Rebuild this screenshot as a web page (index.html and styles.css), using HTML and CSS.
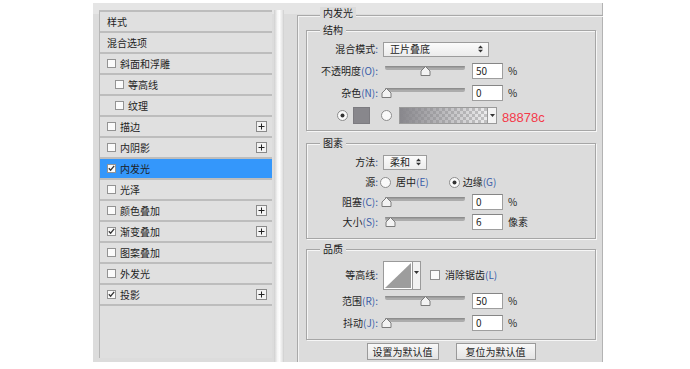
FILE: index.html
```html
<!DOCTYPE html>
<html lang="zh-CN">
<head>
<meta charset="utf-8">
<title>图层样式 - 内发光</title>
<link rel="stylesheet" href="styles.css">
</head>
<body>
<div class="panel">
  <div class="side">
    <ul class="list">
      <li class="row">样式</li>
      <li class="row">混合选项</li>
      <li class="row"><span class="cb"></span>斜面和浮雕</li>
      <li class="row sub"><span class="cb"></span>等高线</li>
      <li class="row sub"><span class="cb"></span>纹理</li>
      <li class="row"><span class="cb"></span>描边<span class="plus"><svg width="9" height="9" viewBox="0 0 9 9"><path d="M4.5 1.5V7.5M1.5 4.5H7.5" stroke="#222" stroke-width="1"/></svg></span></li>
      <li class="row"><span class="cb"></span>内阴影<span class="plus"><svg width="9" height="9" viewBox="0 0 9 9"><path d="M4.5 1.5V7.5M1.5 4.5H7.5" stroke="#222" stroke-width="1"/></svg></span></li>
      <li class="row active"><span class="cb"><svg width="7" height="7" viewBox="0 0 7 7"><path d="M0.8 3.3L2.6 5.2L6.2 0.8" fill="none" stroke="#333" stroke-width="1.3"/></svg></span>内发光</li>
      <li class="row"><span class="cb"></span>光泽</li>
      <li class="row"><span class="cb"></span>颜色叠加<span class="plus"><svg width="9" height="9" viewBox="0 0 9 9"><path d="M4.5 1.5V7.5M1.5 4.5H7.5" stroke="#222" stroke-width="1"/></svg></span></li>
      <li class="row"><span class="cb"><svg width="7" height="7" viewBox="0 0 7 7"><path d="M0.8 3.3L2.6 5.2L6.2 0.8" fill="none" stroke="#333" stroke-width="1.3"/></svg></span>渐变叠加<span class="plus"><svg width="9" height="9" viewBox="0 0 9 9"><path d="M4.5 1.5V7.5M1.5 4.5H7.5" stroke="#222" stroke-width="1"/></svg></span></li>
      <li class="row"><span class="cb"></span>图案叠加</li>
      <li class="row"><span class="cb"></span>外发光</li>
      <li class="row"><span class="cb"><svg width="7" height="7" viewBox="0 0 7 7"><path d="M0.8 3.3L2.6 5.2L6.2 0.8" fill="none" stroke="#333" stroke-width="1.3"/></svg></span>投影<span class="plus"><svg width="9" height="9" viewBox="0 0 9 9"><path d="M4.5 1.5V7.5M1.5 4.5H7.5" stroke="#222" stroke-width="1"/></svg></span></li>
    </ul>
  </div>
  <div class="scroll"></div>
  <div class="main">
    <div class="outer">
      <div class="legend">内发光</div>

      <div class="group g1">
        <div class="legend">结构</div>
        <div class="rows">
          <div class="frow">
            <span class="lab">混合模式<span class="k">:</span></span>
            <div class="select wide">正片叠底<svg class="arr" width="5" height="8" viewBox="0 0 5 8"><path d="M0 3.2L2.5 0.4L5 3.2ZM0 4.8L2.5 7.6L5 4.8Z" fill="#333"/></svg></div>
          </div>
          <div class="frow">
            <span class="lab">不透明度<span class="k">(O):</span></span>
            <svg class="slider" width="90" height="12" viewBox="0 0 90 12"><rect x="5" y="1" width="80" height="4" rx="2" fill="#acacac"/><rect x="5" y="1" width="80" height="1.5" rx="0.75" fill="#8d8d8d"/><path d="M45.5 1.5L50 6V10.5H41V6Z" fill="#f3f3f3" stroke="#7b7b7b"/></svg>
            <span class="input">50</span><span class="unit">%</span>
          </div>
          <div class="frow">
            <span class="lab">杂色<span class="k">(N):</span></span>
            <svg class="slider" width="90" height="12" viewBox="0 0 90 12"><rect x="5" y="1" width="80" height="4" rx="2" fill="#acacac"/><rect x="5" y="1" width="80" height="1.5" rx="0.75" fill="#8d8d8d"/><path d="M6.5 1.5L11 6V10.5H2V6Z" fill="#f3f3f3" stroke="#7b7b7b"/></svg>
            <span class="input">0</span><span class="unit">%</span>
          </div>
          <div class="frow colors">
            <svg class="radio" width="11" height="11" viewBox="0 0 11 11"><circle cx="5.5" cy="5.5" r="5" fill="#fafafa" stroke="#8c8c8c"/><circle cx="5.5" cy="5.5" r="2" fill="#333"/></svg>
            <span class="swatch"></span>
            <svg class="radio r2" width="11" height="11" viewBox="0 0 11 11"><circle cx="5.5" cy="5.5" r="5" fill="#fafafa" stroke="#8c8c8c"/></svg>
            <span class="gradient"><span class="gbar"></span><span class="gdrop"><svg width="5" height="3" viewBox="0 0 5 3"><path d="M0 0H5L2.5 3Z" fill="#333"/></svg></span></span>
            <span class="hex">88878c</span>
          </div>
        </div>
      </div>

      <div class="group g2">
        <div class="legend">图素</div>
        <div class="rows">
          <div class="frow">
            <span class="lab">方法<span class="k">:</span></span>
            <div class="select narrow">柔和<svg class="arr" width="5" height="8" viewBox="0 0 5 8"><path d="M0 3.2L2.5 0.4L5 3.2ZM0 4.8L2.5 7.6L5 4.8Z" fill="#333"/></svg></div>
          </div>
          <div class="frow">
            <span class="lab">源<span class="k">:</span></span>
            <svg class="radio" width="11" height="11" viewBox="0 0 11 11"><circle cx="5.5" cy="5.5" r="5" fill="#fafafa" stroke="#8c8c8c"/></svg>
            <span class="rtext">居中<span class="k">(E)</span></span>
            <svg class="radio r3" width="11" height="11" viewBox="0 0 11 11"><circle cx="5.5" cy="5.5" r="5" fill="#fafafa" stroke="#8c8c8c"/><circle cx="5.5" cy="5.5" r="2" fill="#333"/></svg>
            <span class="rtext">边缘<span class="k">(G)</span></span>
          </div>
          <div class="frow">
            <span class="lab">阻塞<span class="k">(C):</span></span>
            <svg class="slider" width="90" height="12" viewBox="0 0 90 12"><rect x="5" y="1" width="80" height="4" rx="2" fill="#acacac"/><rect x="5" y="1" width="80" height="1.5" rx="0.75" fill="#8d8d8d"/><path d="M6.5 1.5L11 6V10.5H2V6Z" fill="#f3f3f3" stroke="#7b7b7b"/></svg>
            <span class="input">0</span><span class="unit">%</span>
          </div>
          <div class="frow">
            <span class="lab">大小<span class="k">(S):</span></span>
            <svg class="slider" width="90" height="12" viewBox="0 0 90 12"><rect x="5" y="1" width="80" height="4" rx="2" fill="#acacac"/><rect x="5" y="1" width="80" height="1.5" rx="0.75" fill="#8d8d8d"/><path d="M10.5 1.5L15 6V10.5H6V6Z" fill="#f3f3f3" stroke="#7b7b7b"/></svg>
            <span class="input">6</span><span class="unit">像素</span>
          </div>
        </div>
      </div>

      <div class="group g3">
        <div class="legend">品质</div>
        <div class="rows">
          <div class="frow tall">
            <span class="lab">等高线<span class="k">:</span></span>
            <span class="contour"><svg class="cthumb" width="28" height="27" viewBox="0 0 28 27"><rect width="28" height="27" fill="#fff"/><path d="M1 26L27 1V26Z" fill="#9d9d9d"/></svg><span class="cdrop"><svg width="5" height="3" viewBox="0 0 5 3"><path d="M0 0H5L2.5 3Z" fill="#333"/></svg></span></span>
            <span class="box"></span>
            <span class="rtext">消除锯齿<span class="k">(L)</span></span>
          </div>
          <div class="frow">
            <span class="lab">范围<span class="k">(R):</span></span>
            <svg class="slider" width="90" height="12" viewBox="0 0 90 12"><rect x="5" y="1" width="80" height="4" rx="2" fill="#acacac"/><rect x="5" y="1" width="80" height="1.5" rx="0.75" fill="#8d8d8d"/><path d="M45.5 1.5L50 6V10.5H41V6Z" fill="#f3f3f3" stroke="#7b7b7b"/></svg>
            <span class="input">50</span><span class="unit">%</span>
          </div>
          <div class="frow">
            <span class="lab">抖动<span class="k">(J):</span></span>
            <svg class="slider" width="90" height="12" viewBox="0 0 90 12"><rect x="5" y="1" width="80" height="4" rx="2" fill="#acacac"/><rect x="5" y="1" width="80" height="1.5" rx="0.75" fill="#8d8d8d"/><path d="M6.5 1.5L11 6V10.5H2V6Z" fill="#f3f3f3" stroke="#7b7b7b"/></svg>
            <span class="input">0</span><span class="unit">%</span>
          </div>
        </div>
      </div>

      <div class="buttons">
        <span class="btn b1">设置为默认值</span>
        <span class="btn b2">复位为默认值</span>
      </div>
    </div>
  </div>
</div>
</body>
</html>
```

FILE: styles.css
```css
* { box-sizing: border-box; }

body {
  margin: 0;
  background: #ffffff;
  font-family: "Noto Sans CJK SC", "Liberation Sans", sans-serif;
  font-size: 10px;
  color: #1e1e1e;
}

.panel {
  margin: 3px 0 0 93px;
  width: 510px;
  height: 359px;
  display: flex;
  background: linear-gradient(#e5e5e5 0, #e5e5e5 11px, #dcdcdc 11px);
  border-right: 1px solid #b3b3b3;
}

/* ---------- left style list ---------- */
.side {
  flex: none;
  width: 179px;
  padding: 7px 0 0 6px;
}

.list {
  margin: 0;
  padding: 0;
  list-style: none;
  width: 173px;
  height: 348px;
  border-left: 1px solid #b6b6b6;
  border-top: 2px solid #bdbdbd;
  background: #dfdfdf;
}

.row {
  height: 21px;
  display: flex;
  align-items: center;
  padding-left: 7px;
  padding-right: 5px;
  border-bottom: 2px solid #bdbdbd;
  background: #e0e0e0;
  line-height: 12px;
  white-space: nowrap;
}

.row.sub { padding-left: 15px; }

.row.active { background: #3497fb; }

.cb {
  flex: none;
  width: 9px;
  height: 9px;
  margin-right: 4px;
  border: 1px solid #939393;
  background: #fbfbfb;
  display: flex;
  align-items: center;
  justify-content: center;
}

.plus {
  flex: none;
  margin-left: auto;
  width: 11px;
  height: 11px;
  border: 1px solid #8a8a8a;
  background: #f3f3f3;
  display: flex;
}

.scroll {
  flex: none;
  width: 10px;
  margin: 7px 0 0 2px;
  background: linear-gradient(to right, #cfcfcf, #f6f6f6 35%, #fdfdfd 55%, #e3e3e3 85%, #cccccc);
}

/* ---------- right settings ---------- */
.main {
  flex: 1;
  margin-left: 13px;
  padding-top: 12px;
}

.outer {
  height: 347px;
  border-top: 1px solid #a9a9a9;
  border-left: 1px solid #a9a9a9;
  box-shadow: inset 1px 1px 0 #f4f4f4;
  padding: 0 7px 0 8px;
}

.legend {
  display: table;
  padding: 0 3px;
  line-height: 12px;
  background: #dcdcdc;
  color: #1a1a1a;
}

.outer > .legend { margin: -9px 0 0 14px; }

.group {
  border: 1px solid #a6a6a6;
  box-shadow: inset 1px 1px 0 #f6f6f6, 1px 1px 0 #f6f6f6;
}

.group > .legend { margin: -7px 0 0 13px; }

.g1 { margin-top: 11px; height: 101px; }
.g2 { margin-top: 12px; height: 96px; }
.g3 { margin-top: 10px; height: 91px; }

.g1 .rows { padding-top: 2px; }
.g2 .rows { padding-top: 3px; }
.g3 .rows { padding-top: 5px; }

.frow {
  display: flex;
  align-items: center;
  height: 22px;
  white-space: nowrap;
  line-height: 12px;
}

.g2 .frow { height: 20px; }
.g3 .frow { height: 22px; }
.g3 .frow.tall { height: 30px; }

.lab {
  flex: none;
  width: 71px;
  margin-right: 2px;
  text-align: right;
}

.k { color: #3a5ca8; }

.select {
  flex: none;
  margin-left: 3px;
  height: 15px;
  padding: 0 5px 0 6px;
  display: flex;
  align-items: center;
  justify-content: space-between;
  border: 1px solid #9c9c9c;
  background: linear-gradient(#fbfbfb, #ececec);
}

.select.wide { width: 106px; }
.select.narrow { width: 44px; }

.slider { flex: none; display: block; }

.input {
  flex: none;
  width: 31px;
  height: 16px;
  margin-left: 2px;
  padding-left: 3px;
  line-height: 14px;
  background: #ffffff;
  border: 1px solid #9e9e9e;
  border-top-color: #858585;
}

.unit { margin-left: 5px; }

.colors { padding-left: 30px; }
.colors .hex { margin-top: 6px; }

.radio { flex: none; display: block; }

.swatch {
  flex: none;
  width: 17px;
  height: 17px;
  margin-left: 5px;
  background: #88878c;
  border: 1px solid #7c7b80;
}

.r2 { margin-left: 11px; }

.gradient {
  flex: none;
  display: flex;
  width: 98px;
  height: 17px;
  margin-left: 7px;
  border: 1px solid #9a9a9a;
  background: #ffffff;
}

.gbar {
  flex: 1;
  background:
    linear-gradient(to right, #88878c, rgba(136, 135, 140, 0.15)),
    repeating-conic-gradient(#ffffff 0 25%, #cdcdcd 0 50%) 0 0 / 6px 6px;
}

.gdrop {
  flex: none;
  width: 9px;
  border-left: 1px solid #9a9a9a;
  background: #f4f4f4;
  display: flex;
  align-items: center;
  justify-content: center;
}

.hex {
  margin-left: 5px;
  font-family: "Liberation Sans", sans-serif;
  font-size: 13px;
  color: #f43a4a;
}

.rtext { margin-left: 5px; }
.r3 { margin-left: 20px; }
.r3 + .rtext { margin-left: 3px; }

.contour {
  flex: none;
  display: flex;
  margin-left: 3px;
  height: 29px;
  border: 1px solid #9a9a9a;
  background: #ffffff;
}

.cthumb { display: block; }

.cdrop {
  width: 8px;
  border-left: 1px solid #9a9a9a;
  background: #f2f2f2;
  display: flex;
  justify-content: center;
  padding-top: 9px;
}

.box {
  flex: none;
  width: 10px;
  height: 10px;
  margin-left: 9px;
  border: 1px solid #8f8f8f;
  background: #fbfbfb;
}

.buttons {
  display: flex;
  justify-content: center;
  gap: 17px;
  margin-top: 3px;
  width: 290px;
}

.btn {
  height: 17px;
  display: flex;
  align-items: center;
  justify-content: center;
  border: 1px solid #9a9a9a;
  background: linear-gradient(#f8f8f8, #e4e4e4);
  line-height: 12px;
}

.b1 { width: 72px; }
.b2 { width: 80px; }
```
